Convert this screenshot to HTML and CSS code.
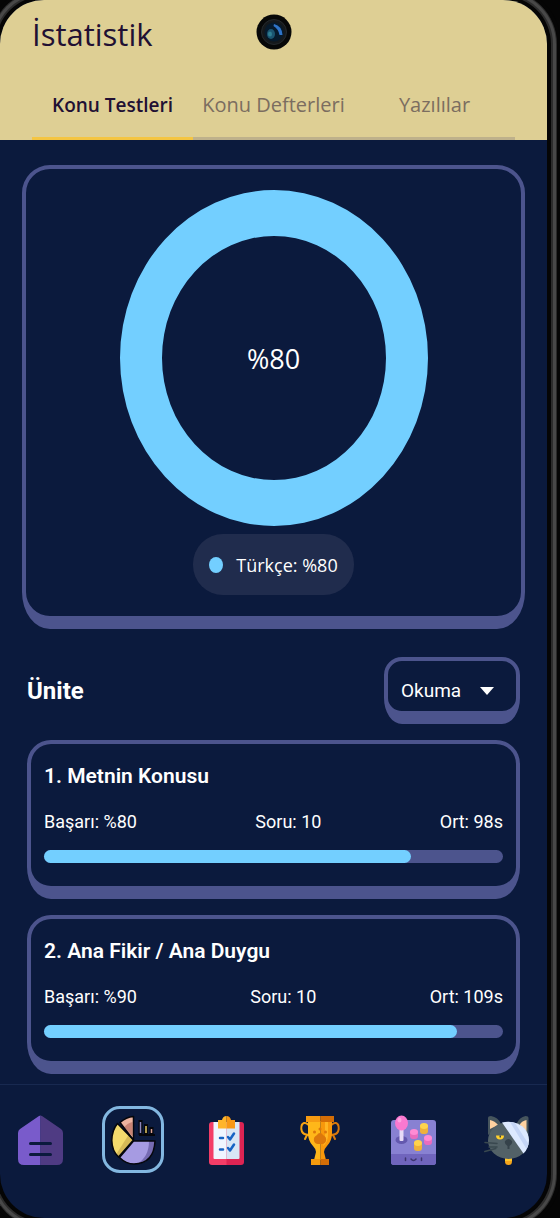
FILE: index.html
```html
<!DOCTYPE html>
<html lang="tr">
<head>
  <meta charset="UTF-8">
  <meta name="viewport" content="width=device-width, initial-scale=1.0">
  <title>İstatistik</title>
  <link rel="stylesheet" href="styles.css">
</head>
<body>

  <div class="screen">
    <header class="header">
      <h1>İstatistik</h1>
      <svg class="camera" viewBox="0 0 36 36" aria-hidden="true">
        <circle cx="18" cy="18" r="17.5" fill="#070808"/>
        <circle cx="18" cy="18" r="12.5" fill="#15191c" stroke="#252a2d"/>
        <circle cx="18" cy="18" r="9.5" fill="#061a2c"/>
        <ellipse cx="15" cy="20" rx="4" ry="5" fill="#1b5570"/>
        <ellipse cx="14" cy="20" rx="2" ry="2.5" fill="#2f7f93"/>
        <path d="M18 10q8 2 8.500 11l-3 0q-1-6-6-9z" fill="#2f74c8"/>
      </svg>
      <nav class="tabs">
        <button class="tab active">Konu Testleri</button>
        <button class="tab">Konu Defterleri</button>
        <button class="tab">Yazılılar</button>
      </nav>
    </header>

    <main>
      <section class="card chart-card">
        <div class="chart">
          <svg viewBox="0 0 308 336" aria-hidden="true">
            <path fill="#73cfff" fill-rule="evenodd" d="M0 168a154 168 0 1 0 308 0a154 168 0 1 0 -308 0zM42 168a112 122 0 1 1 224 0a112 122 0 1 1 -224 0z"/>
          </svg>
          <span class="chart-value">%80</span>
        </div>
        <div class="legend"><span class="dot"></span>Türkçe: %80</div>
      </section>

      <section class="units">
        <div class="units-head">
          <label for="unitSelect">Ünite</label>
          <div class="card select-box">
            <select id="unitSelect">
              <option>Okuma</option>
              <option>Yazma</option>
            </select>
          </div>
        </div>

        <article class="card unit">
          <h2>1. Metnin Konusu</h2>
          <div class="stats">
            <span>Başarı: %80</span>
            <span>Soru: 10</span>
            <span>Ort: 98s</span>
          </div>
          <div class="bar"><div class="bar-fill" style="width: 80%"></div></div>
        </article>

        <article class="card unit">
          <h2>2. Ana Fikir / Ana Duygu</h2>
          <div class="stats">
            <span>Başarı: %90</span>
            <span>Soru: 10</span>
            <span>Ort: 109s</span>
          </div>
          <div class="bar"><div class="bar-fill" style="width: 90%"></div></div>
        </article>
      </section>
    </main>

    <nav class="bottom-nav">
      <button aria-label="Ana sayfa">
        <svg viewBox="0 0 45 50">
          <path d="M22.5 .5Q21 .5 19.5 2L2 14Q0 15.5 0 18v26q0 6 6 6h16.5z" fill="#795bcb"/>
          <path d="M22.5 .5Q24 .5 25.5 2L43 14q2 1.5 2 4v26q0 6-6 6H22.5z" fill="#4f3b83"/>
          <path d="M12.5 28.5h20M12.5 39.5h20" stroke="#0b1a3d" stroke-width="3" stroke-linecap="round"/>
        </svg>
      </button>

      <button class="active" aria-label="İstatistik">
        <svg viewBox="0 0 45 50">
          <path d="M22.5 25V1.5Q15 2 9 7.5z" fill="#eeb49f"/>
          <path d="M21.5 21.5V7q-5 1-8 5z" fill="#c98474"/>
          <path d="M22.5 25L6.5 8.5Q1 15 .8 25.5Q1 36 7.5 42z" fill="#f4da6c"/>
          <path d="M7.5 42L22.5 25l-5-5-11.5 18z" fill="#d7b957"/>
          <path d="M22.5 26H44Q43 48.5 23 49q-8 0-14.5-6.5z" fill="#a69be2"/>
          <path d="M38 26h6q-1 20-18 23Q38 42 38 26z" fill="#766bb2"/>
          <g fill="none" stroke="#05060c" stroke-width="1.5" stroke-linejoin="round">
            <path d="M22.5 25V1.5Q15 2 9 7.5z"/>
            <path d="M22.5 25L6.5 8.5Q1 15 .8 25.5Q1 36 7.5 42z"/>
            <path d="M22.5 26H44Q43 48.5 23 49q-8 0-14.5-6.5z"/>
          </g>
          <path d="M28 20h16" stroke="#05060c" stroke-width="2"/>
          <path d="M29.5 5V20M35 9V20M40.5 12V20" stroke="#05060c" stroke-width="4"/>
          <path d="M29.5 7V18" stroke="#8d86bb" stroke-width="1.5"/>
          <path d="M35 11V18" stroke="#e4cb65" stroke-width="1.5"/>
          <path d="M40.5 14V18" stroke="#dda092" stroke-width="1.5"/>
        </svg>
      </button>

      <button aria-label="Testler">
        <svg viewBox="0 0 45 50">
          <path d="M8 7h15v43H8q-3 0-3-3V10q0-3 3-3z" fill="#f33d67"/>
          <path d="M22.5 7H37q3 0 3 3v37q0 3-3 3H22.5z" fill="#dd2453"/>
          <path d="M9.5 7h13v37h-12q-1 0-1-1z" fill="#f0f5ff"/>
          <path d="M22.5 7h13v36q0 1-1 1h-12z" fill="#d8e6f5"/>
          <path d="M14 5H18q1-4 4.5-4v12.5H14z" fill="#ffb52b"/>
          <path d="M31 5H27q-1-4-4.5-4v12.5H31z" fill="#f89815"/>
          <path d="M16 23h3M16 34.5h3M24 22l2 2.5L30 18.5M24 33l2 2.5L30 29.5" fill="none" stroke="#1763c4" stroke-width="2.5" stroke-linecap="round" stroke-linejoin="round"/>
        </svg>
      </button>

      <button aria-label="Kupalar">
        <svg viewBox="0 0 45 50">
          <g fill="none" stroke-width="2" stroke-linecap="round">
            <path d="M10 9.5Q8 7.5 6 8q-3 1-2.7 6 .7 5 5 5.5l3 .5M9 20l-2 4" stroke="#f6a313"/>
            <path d="M34 9.5q2-2 4-1.5 3 1 2.7 6-.7 5-5 5.5l-3 .5M35 20l2 4" stroke="#d9790c"/>
          </g>
          <path d="M10 6h12.5v39H16l2-8q0-3-3-6-5-5-5-13z" fill="#ffb719"/>
          <path d="M22.5 6H34v12q0 8-5 13-3 3-3 6l2 8h-5.5z" fill="#f8980b"/>
          <path d="M27 6h3v14q0 7-5 11 2-5 2-11z" fill="#ffb523"/>
          <path d="M8 1h14.5v6H8z" fill="#f69b12"/>
          <path d="M22.5 1H36v6H22.5z" fill="#d46d06"/>
          <path d="M13 44h9.5v6H13z" fill="#f49a0d"/>
          <path d="M22.5 44H31v6h-8.5z" fill="#d46d06"/>
          <g fill="#dc780b">
            <path d="M22 18q-2 0-3 2-4 2-3 6 1 3 4 3h4q3 0 4-3 1-4-3-6-1-2-3-2z"/>
            <circle cx="16.5" cy="17" r="1.5"/><circle cx="22" cy="14" r="1.5"/><circle cx="27.5" cy="17" r="1.5"/>
          </g>
        </svg>
      </button>

      <button aria-label="Oyunlar">
        <svg viewBox="0 0 45 50">
          <rect y="5" width="45" height="45" rx="3" fill="#8881d2"/>
          <path d="M0 39h45v8q0 3-3 3H3q-3 0-3-3z" fill="#7065bd"/>
          <ellipse cx="10.5" cy="25" rx="6" ry="4" fill="#6358ae"/>
          <rect x="8.5" y="13" width="4" height="13" rx="1" fill="#e7dcf7"/>
          <ellipse cx="10.5" cy="8" rx="6.5" ry="7.5" fill="#fa79d0"/>
          <ellipse cx="8.5" cy="5" rx="2" ry="2.5" fill="#ffa1e1"/>
          <g fill="#e96cbe">
            <rect x="19" y="15" width="8" height="9" rx="3"/><rect x="33" y="21" width="8" height="9" rx="3"/>
          </g>
          <g fill="#eeb13b">
            <rect x="29" y="9" width="8" height="10" rx="3"/><rect x="23" y="26" width="8" height="10" rx="3"/>
          </g>
          <g fill="#ff8bd5"><ellipse cx="23" cy="17" rx="4" ry="3"/><ellipse cx="37" cy="23" rx="4" ry="3"/></g>
          <g fill="#ffd34d"><ellipse cx="33" cy="11" rx="4" ry="3"/><ellipse cx="27" cy="28" rx="4" ry="3"/></g>
          <path d="M14.5 43v2.5M30.5 43v2.5M20 44q2.5 3 5 0" fill="none" stroke="#3d356f" stroke-width="1.5" stroke-linecap="round"/>
        </svg>
      </button>

      <button aria-label="Profil">
        <svg viewBox="0 0 45 50">
          <path d="M4 20V3q0-2 3-2 7 1 10 8zM44.5 20V3q0-2-3-2-6 1-9 8z" fill="#46555d"/>
          <path d="M6 14V5q5 1 8 5zM42.5 16V5q-5 1-7 5z" fill="#ffd2a0"/>
          <circle cx="24.5" cy="46.5" r="3.5" fill="#f5a51b"/>
          <path d="M21 42h7v4h-7z" fill="#ffc72d"/>
          <ellipse cx="24.5" cy="25.5" rx="20.5" ry="18.5" fill="#526167"/>
          <path d="M18 7.5Q24 6 30 7.5 44 11 45 25q0 8-5.5 13.5z" fill="#dce9ff"/>
          <path d="M26 7q2 0 5 1l13.5 21-2 5z" fill="#c4d5f6"/>
          <path d="M12 20.5h8q0 4-4 4t-4-4z" fill="#ffd02d"/>
          <path d="M15.5 20.5h1.5v2h-1.5z" fill="#37434a"/>
          <path d="M21 26q3.5-4 7 0 1 3-2.5 5v3h-2v-3Q20 29 21 26z" fill="#35424a"/>
          <path d="M1 27.5l12 1M.8 36.5l11-3M5 32l8 0" stroke="#39484f" stroke-width="1.5" stroke-linecap="round"/>
        </svg>
      </button>
    </nav>
  </div>

</body>
</html>
```
FILE: styles.css
```css
* {
  box-sizing: border-box;
}

body {
  margin: 0;
  padding-right: 13px;
  background-color: #050505;
  color: #fff;
  font-family: Roboto, 'Liberation Sans', sans-serif;
  overflow-x: hidden;
}

button, select {
  font-family: inherit;
  color: inherit;
  background: none;
  border: none;
  padding: 0;
  cursor: pointer;
}

/* The shadow rings are the phone's metal frame */
.screen {
  display: flex;
  flex-direction: column;
  min-height: 100vh;
  background-color: #0b1a3d;
  border-radius: 44px;
  box-shadow: 0 0 0 4px #050505, 0 0 0 6px #2c2c2c, 0 0 0 9px #484848, 0 0 0 10px #2a2a2a, 0 0 0 14px #050505;
}

.header {
  position: relative;
  padding: 10px 32px 0;
  background-color: #decf94;
  border-radius: 44px 44px 0 0;
  color: #211033;
  font-family: 'Open Sans', sans-serif;
}

h1 {
  margin: 0;
  font-size: 31px;
  line-height: 48px;
  font-weight: 400;
}

.camera {
  position: absolute;
  top: 14px;
  left: 50%;
  width: 36px;
  transform: translateX(-50%);
}

.tabs {
  display: grid;
  grid-template-columns: repeat(3, 1fr);
  margin-top: 14px;
}

.tab {
  height: 68px;
  border-bottom: 3px solid #beb18b;
  color: #7b6d60;
  font-family: 'Open Sans', sans-serif;
  font-size: 20px;
  font-weight: 400;
  white-space: nowrap;
}

.tab.active {
  border-color: #f4c542;
  color: #211033;
  font-size: 19px;
  font-weight: 600;
}

main {
  flex: 1;
  padding: 25px 22px 10px;
}

/* Taller bottom corners keep the inside round above the thick edge */
.card {
  border: 4px solid #4c548d;
  border-bottom-width: 13px;
  border-radius: 28px / 28px 28px 37px 37px;
}

.chart-card {
  display: flex;
  flex-direction: column;
  align-items: center;
  gap: 8px;
  padding: 21px 16px;
}

.chart {
  display: grid;
  place-items: center;
  width: 100%;
  max-width: 308px;
}

.chart svg, .chart-value {
  grid-area: 1 / 1;
}

.chart svg {
  display: block;
  width: 100%;
}

.chart-value {
  font-family: 'Open Sans', sans-serif;
  font-size: 27px;
}

.legend {
  display: flex;
  align-items: center;
  gap: 13px;
  height: 61px;
  padding: 0 16px;
  border-radius: 30px;
  background-color: #202c4d;
  font-family: 'Open Sans', sans-serif;
  font-size: 18px;
}

.dot {
  width: 14px;
  height: 16px;
  border-radius: 50%;
  background-color: #73cfff;
}

.units {
  display: flex;
  flex-direction: column;
  gap: 16px;
  padding: 28px 5px 0;
}

.units-head {
  display: flex;
  align-items: center;
  justify-content: space-between;
}

.units-head label {
  font-size: 24px;
  font-weight: 700;
}

.select-box {
  position: relative;
  border-radius: 18px / 18px 18px 26px 26px;
}

.select-box select {
  display: block;
  width: 128px;
  height: 50px;
  padding: 9px 40px 0 13px;
  font-size: 19px;
  appearance: none;
}

.select-box option {
  background-color: #0b1a3d;
}

.select-box::after {
  content: "";
  position: absolute;
  top: 26px;
  right: 22px;
  border: 7px solid transparent;
  border-top: 8px solid #fff;
  border-bottom: 0;
  pointer-events: none;
}

.unit {
  padding: 20px 13px 23px;
  border-radius: 24px / 24px 24px 32px 32px;
}

.unit h2 {
  margin: 0;
  font-size: 21px;
  line-height: 24px;
  font-weight: 600;
}

.stats {
  display: flex;
  justify-content: space-between;
  margin: 22px 0 16px;
  font-size: 18px;
  line-height: 24px;
}

.bar {
  height: 13px;
  border-radius: 7px;
  background-color: #4c548d;
}

.bar-fill {
  height: 100%;
  border-radius: 7px;
  background-color: #73cfff;
}

.bottom-nav {
  display: flex;
  justify-content: space-between;
  padding: 21px 9px 45px;
  border-top: 1px solid #182950;
}

.bottom-nav button {
  display: grid;
  place-items: center;
  width: 62px;
  height: 67px;
}

.bottom-nav .active {
  border: 3px solid #83b7e0;
  border-radius: 18px;
}

.bottom-nav svg {
  width: 45px;
  height: 50px;
}
```
